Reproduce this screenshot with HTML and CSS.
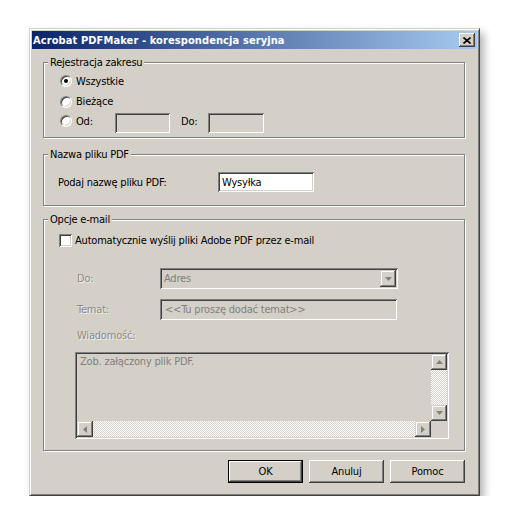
FILE: index.html
```html
<!DOCTYPE html>
<html lang="pl">
<head>
  <meta charset="UTF-8">
  <title>Acrobat PDFMaker - korespondencja seryjna</title>
  <link rel="stylesheet" href="styles.css">
</head>
<body>
  <div class="dialog">
    <div class="titlebar">
      <span class="title">Acrobat PDFMaker - korespondencja seryjna</span>
      <span class="close">
        <svg width="8" height="7" viewBox="0 0 8 7"><path d="M0.5 0.5 L7.5 6.5 M7.5 0.5 L0.5 6.5" stroke="#000" stroke-width="1.6" fill="none"/></svg>
      </span>
    </div>

    <div class="client">
      <!-- zakres rekordów -->
      <div class="group range">
        <span class="group-caption">Rejestracja zakresu</span>
        <div class="option row-1"><span class="radio checked"></span><span class="opt-label">Wszystkie</span></div>
        <div class="option row-2"><span class="radio"></span><span class="opt-label">Bieżące</span></div>
        <div class="option row-3">
          <span class="radio lifted"></span><span class="opt-label od lifted">Od:</span>
          <span class="field disabled from"></span>
          <span class="do-label lifted">Do:</span>
          <span class="field disabled to"></span>
        </div>
      </div>

      <!-- nazwa pliku -->
      <div class="group filename">
        <span class="group-caption">Nazwa pliku PDF</span>
        <div class="file-row">
          <span class="file-label">Podaj nazwę pliku PDF:</span>
          <span class="field file-input">Wysyłka</span>
        </div>
      </div>

      <!-- e-mail -->
      <div class="group mail">
        <span class="group-caption">Opcje e-mail</span>
        <div class="check-row"><span class="checkbox"></span><span class="check-label">Automatycznie wyślij pliki Adobe PDF przez e-mail</span></div>

        <div class="mail-row first">
          <span class="mail-label muted">Do:</span>
          <span class="field disabled select">
            <span class="select-text">Adres</span>
            <span class="drop-btn">
              <svg width="7" height="4" viewBox="0 0 7 4"><path d="M0 0 H7 L3.5 4 Z" fill="#808080"/></svg>
            </span>
          </span>
        </div>
        <div class="mail-row">
          <span class="mail-label muted">Temat:</span>
          <span class="field disabled subject">&lt;&lt;Tu proszę dodać temat&gt;&gt;</span>
        </div>
        <div class="message-label muted">Wiadomość:</div>

        <div class="field disabled message">
          <div class="message-text">Zob. załączony plik PDF.</div>
          <div class="vscroll">
            <span class="sb-btn"><svg width="7" height="4" viewBox="0 0 7 4"><path d="M0 4 H7 L3.5 0 Z" fill="#808080"/></svg></span>
            <span class="sb-track"></span>
            <span class="sb-btn"><svg width="7" height="4" viewBox="0 0 7 4"><path d="M0 0 H7 L3.5 4 Z" fill="#808080"/></svg></span>
          </div>
          <div class="hscroll">
            <span class="sb-btn"><svg width="4" height="7" viewBox="0 0 4 7"><path d="M4 0 V7 L0 3.5 Z" fill="#808080"/></svg></span>
            <span class="sb-track"></span>
            <span class="sb-btn"><svg width="4" height="7" viewBox="0 0 4 7"><path d="M0 0 V7 L4 3.5 Z" fill="#808080"/></svg></span>
          </div>
          <div class="sb-corner"></div>
        </div>
      </div>

      <div class="buttons">
        <span class="btn default">OK</span>
        <span class="btn">Anuluj</span>
        <span class="btn">Pomoc</span>
      </div>
    </div>
  </div>
</body>
</html>
```

FILE: styles.css
```css
:root {
  --face: #d4d0c8;
  --shadow: #808080;
  --dark: #404040;
  --light: #ffffff;
  --muted: #8c8984;
}
* { box-sizing: border-box; }
body {
  margin: 0;
  padding: 28px 0 0 29px;
  background: #fff;
  font-family: "DejaVu Sans Condensed", "Liberation Sans", Arial, sans-serif;
  font-size: 11px;
  letter-spacing: -0.2px;
  color: #000;
}

/* okno */
.dialog {
  width: 451px;
  padding: 2px;
  background: var(--face);
  border: 1px solid;
  border-color: var(--face) var(--dark) var(--dark) var(--face);
  box-shadow: inset 1px 1px var(--light), inset -1px -1px var(--shadow), 4px 5px 8px rgba(0,0,0,0.3);
}
.titlebar {
  height: 18px;
  display: flex;
  align-items: center;
  justify-content: space-between;
  padding: 0 2px 0 1px;
  background: linear-gradient(90deg, #0a246a, #a6caf0);
}
.title {
  color: #fff;
  font-weight: 700;
  font-size: 11px;
  letter-spacing: 0.1px;
}
.close {
  width: 16px;
  height: 14px;
  display: flex;
  align-items: center;
  justify-content: center;
  background: var(--face);
  box-shadow: inset -1px -1px var(--dark), inset 1px 1px var(--light), inset -2px -2px var(--shadow);
}
.client {
  padding: 13px 12px 10px 11px;
}

/* ramki grup */
.group {
  position: relative;
  border: 1px solid var(--shadow);
  box-shadow: inset 1px 1px var(--light), 1px 1px var(--light);
}
.group-caption {
  position: absolute;
  top: -7px;
  left: 4px;
  padding: 0 2px;
  line-height: 13px;
  background: var(--face);
}

/* pola */
.field {
  display: flex;
  align-items: center;
  height: 20px;
  padding: 0 4px;
  background: #fff;
  box-shadow: inset 1px 1px var(--shadow), inset -1px -1px var(--light), inset 2px 2px var(--dark), inset -2px -2px var(--face);
  white-space: nowrap;
}
.field.disabled {
  background: var(--face);
  color: #7f7f7f;
}
.muted {
  color: var(--muted);
  text-shadow: 1px 1px 0 rgba(255,255,255,0.7);
}

/* zakres */
.range {
  padding: 8px 0 3px 16px;
}
.option {
  display: flex;
  align-items: center;
}
.row-1 { height: 20px; }
.row-2 { height: 21px; }
.row-3 { height: 22px; }
.lifted { margin-bottom: 4px; }
.radio {
  width: 12px;
  height: 12px;
  flex: none;
  display: flex;
  align-items: center;
  justify-content: center;
  border-radius: 50%;
  background: #fff;
  border: 1px solid;
  border-color: var(--shadow) var(--light) var(--light) var(--shadow);
  box-shadow: inset 1px 1px var(--dark), inset -1px -1px var(--face);
}
.radio.checked::after {
  content: "";
  width: 4px;
  height: 4px;
  border-radius: 50%;
  background: #000;
}
.opt-label { margin-left: 4px; }
.od { width: 39px; }
.from { width: 55px; }
.do-label {
  width: 27px;
  margin-left: 11px;
}
.to { width: 56px; }

/* nazwa pliku */
.filename {
  margin-top: 16px;
  padding: 17px 0 13px 14px;
}
.file-row {
  display: flex;
  align-items: center;
}
.file-label { width: 160px; }
.file-input { width: 96px; }

/* e-mail */
.mail {
  margin-top: 13px;
  padding: 12px 0 11px 15px;
}
.check-row {
  display: flex;
  align-items: center;
  height: 16px;
}
.checkbox {
  width: 13px;
  height: 13px;
  background: #fff;
  box-shadow: inset 1px 1px var(--shadow), inset -1px -1px var(--light), inset 2px 2px var(--dark), inset -2px -2px var(--face);
}
.check-label { margin-left: 3px; }
.mail-row {
  display: flex;
  align-items: center;
  margin-top: 10px;
  padding-left: 18px;
}
.mail-row.first { margin-top: 20px; }
.mail-label { width: 83px; }
.select {
  width: 238px;
  height: 21px;
  padding: 2px 2px 2px 4px;
  justify-content: space-between;
}
.drop-btn {
  width: 16px;
  height: 17px;
  display: flex;
  align-items: center;
  justify-content: center;
  background: var(--face);
  box-shadow: inset -1px -1px var(--dark), inset 1px 1px var(--face), inset -2px -2px var(--shadow), inset 2px 2px var(--light);
}
.subject {
  width: 237px;
  height: 21px;
  padding-left: 5px;
}
.message-label {
  margin-top: 9px;
  padding-left: 18px;
  line-height: 13px;
}

/* pole wiadomości z paskami przewijania */
.message {
  width: 374px;
  height: 87px;
  margin: 10px 0 0 16px;
  padding: 2px;
  display: grid;
  grid-template-columns: 1fr 16px;
  grid-template-rows: 1fr 16px;
  align-items: stretch;
}
.message-text {
  padding: 1px 3px;
  line-height: 13px;
}
.vscroll,
.hscroll {
  display: flex;
}
.vscroll { flex-direction: column; }
.sb-track {
  flex: 1;
  background: repeating-conic-gradient(#fff 0 25%, var(--face) 0 50%) 0 0 / 2px 2px;
}
.sb-btn {
  width: 16px;
  height: 16px;
  flex: none;
  display: flex;
  align-items: center;
  justify-content: center;
  background: var(--face);
  box-shadow: inset -1px -1px var(--dark), inset 1px 1px var(--face), inset -2px -2px var(--shadow), inset 2px 2px var(--light);
}
.sb-corner { background: var(--face); }

/* przyciski */
.buttons {
  display: flex;
  justify-content: flex-end;
  gap: 6px;
  margin-top: 9px;
}
.btn {
  width: 75px;
  height: 23px;
  display: flex;
  align-items: center;
  justify-content: center;
  background: var(--face);
  box-shadow: inset -1px -1px var(--dark), inset 1px 1px var(--light), inset -2px -2px var(--shadow), inset 2px 2px var(--face);
}
.btn.default {
  border: 1px solid #000;
}
```
